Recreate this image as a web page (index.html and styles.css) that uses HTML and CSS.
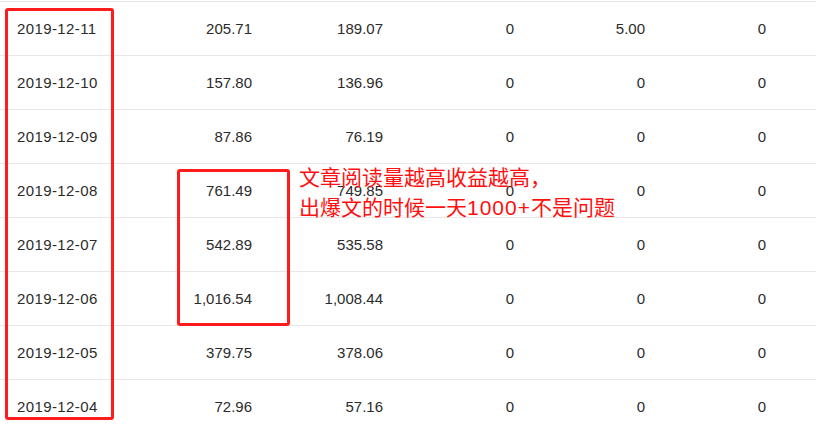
FILE: index.html
```html
<!DOCTYPE html>
<html lang="zh-CN">
<head>
    <meta charset="UTF-8">
    <title>收益明细</title>
    <link rel="stylesheet" href="styles.css">
</head>
<body>
    <div class="page">
        <!-- 数据表 -->
        <div class="table">
            <div class="row"><span class="date">2019-12-11</span><span>205.71</span><span>189.07</span><span>0</span><span>5.00</span><span>0</span></div>
            <div class="row"><span class="date">2019-12-10</span><span>157.80</span><span>136.96</span><span>0</span><span>0</span><span>0</span></div>
            <div class="row"><span class="date">2019-12-09</span><span>87.86</span><span>76.19</span><span>0</span><span>0</span><span>0</span></div>
            <div class="row"><span class="date">2019-12-08</span><span>761.49</span><span>749.85</span><span>0</span><span>0</span><span>0</span></div>
            <div class="row"><span class="date">2019-12-07</span><span>542.89</span><span>535.58</span><span>0</span><span>0</span><span>0</span></div>
            <div class="row"><span class="date">2019-12-06</span><span>1,016.54</span><span>1,008.44</span><span>0</span><span>0</span><span>0</span></div>
            <div class="row"><span class="date">2019-12-05</span><span>379.75</span><span>378.06</span><span>0</span><span>0</span><span>0</span></div>
            <div class="row"><span class="date">2019-12-04</span><span>72.96</span><span>57.16</span><span>0</span><span>0</span><span>0</span></div>
        </div>

        <!-- 标注 -->
        <div class="mark mark-dates"></div>
        <div class="mark mark-income"></div>
        <div class="note">文章阅读量越高收益越高，<br>出爆文的时候一天<span class="num">1000+</span>不是问题</div>
    </div>
</body>
</html>
```

FILE: styles.css
```css
* {
    margin: 0;
    padding: 0;
    box-sizing: border-box;
}

body {
    font-family: "Liberation Sans", Arial, "Noto Sans CJK SC", sans-serif;
    background-color: #fff;
    color: #2b2b2b;
    overflow: hidden;
}

.page {
    position: relative;
    width: 816px;
    height: 424px;
}

.table {
    margin-top: 1px;
    border-top: 1px solid #e8e8e8;
}

.row {
    display: grid;
    grid-template-columns: 120px 132px 131px 131px 131px 121px 50px;
    height: 54px;
    align-items: center;
    border-bottom: 1px solid #e8e8e8;
    font-size: 15px;
}

.row span {
    text-align: right;
}

.row .date {
    text-align: left;
    padding-left: 17px;
    letter-spacing: 0.4px;
}

.mark {
    position: absolute;
    border: 3px solid #ff1c1c;
    border-radius: 3px;
}

.mark-dates {
    left: 5px;
    top: 7px;
    width: 109px;
    height: 412px;
}

.mark-income {
    left: 177px;
    top: 168px;
    width: 113px;
    height: 157px;
}

.note {
    position: absolute;
    left: 299px;
    top: 160px;
    font-family: "Noto Sans CJK SC", sans-serif;
    font-size: 21px;
    line-height: 30px;
    color: #ff1010;
}

.note .num {
    font-family: "Liberation Sans", Arial, sans-serif;
    font-size: 21px;
    letter-spacing: 1px;
}
```
